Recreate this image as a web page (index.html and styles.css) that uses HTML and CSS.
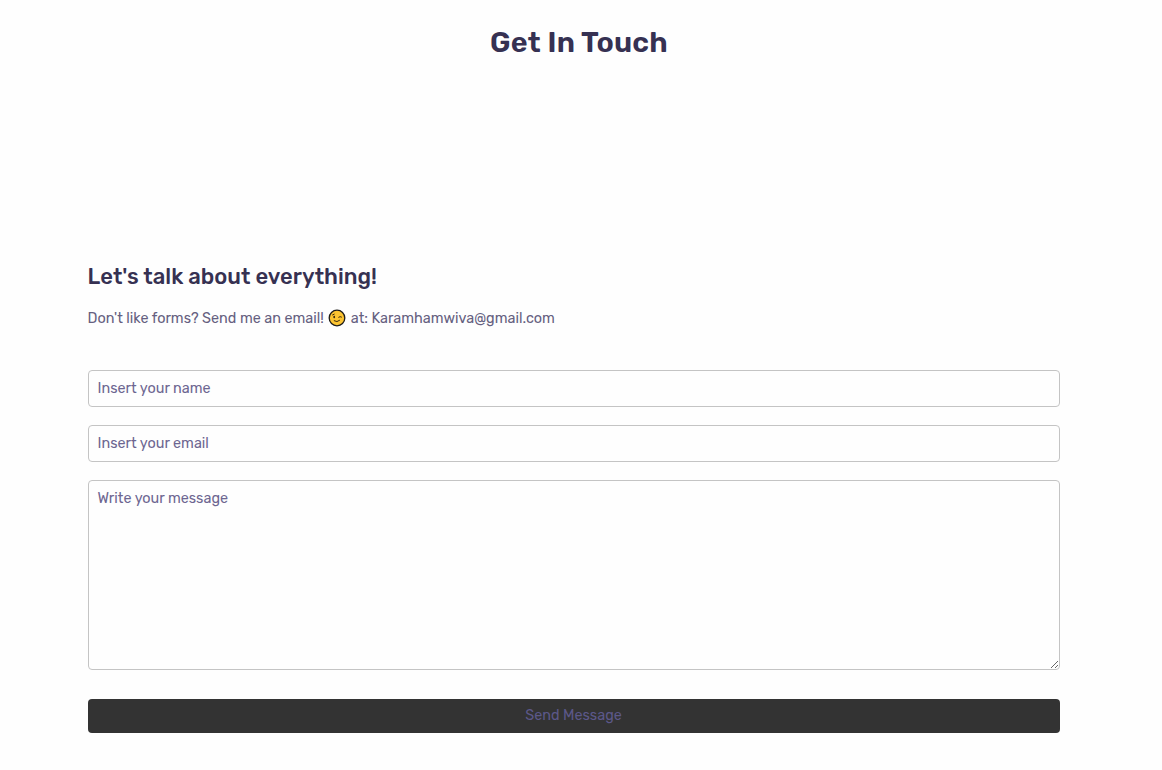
FILE: index.html
```html
<!DOCTYPE html>
<html lang="en">
<head>
<meta charset="utf-8">
<title>Get In Touch</title>
<link rel="stylesheet" href="styles.css">
</head>
<body>
<section class="contact">
  <h2 class="section-title">Get In Touch</h2>
  <div class="contact-container">
    <h3 class="contact-title">Let's talk about everything!</h3>
    <p class="contact-details"><span class="contact-lead">Don't like forms? Send me an email!</span><svg class="wink" viewBox="0 0 18 18" aria-hidden="true"><circle cx="9" cy="9" r="7.8" fill="#fcc431" stroke="#1c1b19" stroke-width="1.3"/><ellipse cx="6.2" cy="8" rx=".9" ry="1.2" fill="#3a2b10"/><path d="M4.6 5.9 6.2 5.2M10.7 8.2q1.5-1.2 2.8-.2M6.2 11.8q2.8 2 5.4-.4" fill="none" stroke="#3a2b10" stroke-width="1" stroke-linecap="round"/></svg><span class="contact-address">at: Karamhamwiva@gmail.com</span></p>
    <form class="contact-form">
      <input class="field" type="text" placeholder="Insert your name">
      <input class="field" type="email" placeholder="Insert your email">
      <textarea class="field field-message" placeholder="Write your message"></textarea>
      <button class="send" type="button">Send Message</button>
    </form>
  </div>
</section>
</body>
</html>
```
FILE: styles.css
```css
* { box-sizing: border-box; }

body {
  margin: 0;
  background: #fefefe;
  color: #656080;
  font-family: Rubik, Roboto, sans-serif;
  font-size: 14.4px;
}

.contact { padding-top: 24px; }

.section-title {
  margin: 0;
  padding-right: 4px;
  height: 36px;
  line-height: 36px;
  text-align: center;
  color: #363152;
  font-size: 28.8px;
  font-weight: 600;
  letter-spacing: 0.22px;
}

.contact-container {
  width: 972px;
  margin: 201px 0 0 88px;
}

.contact-title {
  margin: 0 0 0 -0.4px;
  height: 32px;
  line-height: 32px;
  color: #363152;
  font-size: 22px;
  font-weight: 500;
  letter-spacing: 0.02px;
}

.contact-details {
  display: flex;
  align-items: center;
  margin: 15px 0 0 -0.4px;
  height: 20px;
  white-space: nowrap;
}

.contact-lead { width: 240.4px; }
.wink { width: 18px; height: 18px; margin-right: 4.8px; }

.contact-form {
  display: flex;
  flex-direction: column;
  gap: 18px;
  margin-top: 42px;
}

.field {
  width: 100%;
  height: 37px;
  padding: 8px 8.5px;
  border: 1px solid #c4c4c4;
  border-radius: 4px;
  outline: 0;
  background: #fefefe;
  color: #5f5a7d;
  font: 14.4px/19px Rubik, Roboto, sans-serif;
}

.field::placeholder { color: #6d6691; opacity: 1; }
.field-message { height: 190px; resize: vertical; }

.send {
  height: 34px;
  margin-top: 11px;
  padding: 0 1px 2px 0;
  border: 0;
  border-radius: 4px;
  background: #333;
  color: #5c5889;
  font: 14.4px/19px Rubik, Roboto, sans-serif;
}
```
